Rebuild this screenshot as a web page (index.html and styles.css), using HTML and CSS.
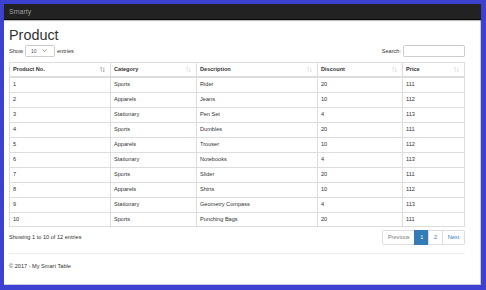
FILE: index.html
```
<!DOCTYPE html>
<html lang="en">
<head>
    <meta name="viewport" content="width=device-width, initial-scale=1.0">
    <title>Product - Smarty</title>
    <link rel="stylesheet" href="styles.css">
</head>
<body>
    <div class="frame">
        <nav class="navbar">
            <span class="brand">Smarty</span>
        </nav>

        <div class="container">
            <h1>Product</h1>

            <div class="controls">
                <label class="length">Show
                    <span class="select">10
                        <svg width="5" height="3" viewBox="0 0 5 3"><path d="M0.5 0.5 L2.5 2.5 L4.5 0.5" fill="none" stroke="#555" stroke-width="0.6"/></svg>
                    </span>
                    entries</label>
                <label class="filter">Search: <span class="search"></span></label>
            </div>

            <table class="grid">
                <colgroup>
                    <col style="width: 101px">
                    <col style="width: 86px">
                    <col style="width: 121px">
                    <col style="width: 85px">
                    <col style="width: 62px">
                </colgroup>
                <thead>
                    <tr>
                        <th><div class="th-in">Product No. <svg class="sort active" width="5" height="5" viewBox="0 0 5 5"><path d="M1.2 0.3 V4.7 M0.3 1.3 L1.2 0.3 L2.1 1.3 M3.8 0.3 V4.7 M2.9 3.7 L3.8 4.7 L4.7 3.7" fill="none" stroke="currentColor" stroke-width="0.5"/></svg></div></th>
                        <th><div class="th-in">Category <svg class="sort" width="5" height="5" viewBox="0 0 5 5"><path d="M1.2 0.3 V4.7 M0.3 1.3 L1.2 0.3 L2.1 1.3 M3.8 0.3 V4.7 M2.9 3.7 L3.8 4.7 L4.7 3.7" fill="none" stroke="currentColor" stroke-width="0.5"/></svg></div></th>
                        <th><div class="th-in">Description <svg class="sort" width="5" height="5" viewBox="0 0 5 5"><path d="M1.2 0.3 V4.7 M0.3 1.3 L1.2 0.3 L2.1 1.3 M3.8 0.3 V4.7 M2.9 3.7 L3.8 4.7 L4.7 3.7" fill="none" stroke="currentColor" stroke-width="0.5"/></svg></div></th>
                        <th><div class="th-in">Discount <svg class="sort" width="5" height="5" viewBox="0 0 5 5"><path d="M1.2 0.3 V4.7 M0.3 1.3 L1.2 0.3 L2.1 1.3 M3.8 0.3 V4.7 M2.9 3.7 L3.8 4.7 L4.7 3.7" fill="none" stroke="currentColor" stroke-width="0.5"/></svg></div></th>
                        <th><div class="th-in">Price <svg class="sort" width="5" height="5" viewBox="0 0 5 5"><path d="M1.2 0.3 V4.7 M0.3 1.3 L1.2 0.3 L2.1 1.3 M3.8 0.3 V4.7 M2.9 3.7 L3.8 4.7 L4.7 3.7" fill="none" stroke="currentColor" stroke-width="0.5"/></svg></div></th>
                    </tr>
                </thead>
                <tbody>
                    <tr><td>1</td><td>Sports</td><td>Rider</td><td>20</td><td>111</td></tr>
                    <tr><td>2</td><td>Apparels</td><td>Jeans</td><td>10</td><td>112</td></tr>
                    <tr><td>3</td><td>Stationary</td><td>Pen Set</td><td>4</td><td>113</td></tr>
                    <tr><td>4</td><td>Sports</td><td>Dumbles</td><td>20</td><td>111</td></tr>
                    <tr><td>5</td><td>Apparels</td><td>Trouser</td><td>10</td><td>112</td></tr>
                    <tr><td>6</td><td>Stationary</td><td>Notebooks</td><td>4</td><td>113</td></tr>
                    <tr><td>7</td><td>Sports</td><td>Slider</td><td>20</td><td>111</td></tr>
                    <tr><td>8</td><td>Apparels</td><td>Shirts</td><td>10</td><td>112</td></tr>
                    <tr><td>9</td><td>Stationary</td><td>Geometry Compass</td><td>4</td><td>113</td></tr>
                    <tr><td>10</td><td>Sports</td><td>Punching Bags</td><td>20</td><td>111</td></tr>
                </tbody>
            </table>

            <div class="table-foot">
                <div class="info">Showing 1 to 10 of 12 entries</div>
                <ul class="pagination">
                    <li class="disabled"><a>Previous</a></li>
                    <li class="active"><a>1</a></li>
                    <li><a>2</a></li>
                    <li><a>Next</a></li>
                </ul>
            </div>

            <hr>
            <footer>
                <p>&copy; 2017 - My Smart Table</p>
            </footer>
        </div>
    </div>
</body>
</html>
```

FILE: styles.css
```
* {
    margin: 0;
    padding: 0;
    box-sizing: border-box;
}
body {
    font-family: 'Liberation Sans', Arial, sans-serif;
    font-size: 5.6px;
    line-height: 8px;
    color: #333;
    background: #3d41cf;
}
.frame {
    margin: 4px 5px 5px 4px;
    height: 281px;
    background: #fff;
    border-right: 1px solid #c9c9e6;
    border-bottom: 1px solid #c9c9e6;
}
.navbar {
    height: 16px;
    background: #222;
    border-bottom: 1px solid #080808;
    box-shadow: 0 1px 1px rgba(0, 0, 0, 0.25);
    display: flex;
    align-items: center;
    padding-left: 5px;
    margin-right: -1px;
}
.brand {
    font-size: 7px;
    color: #9d9d9d;
}
.container {
    padding: 0 15px 0 5px;
}
h1 {
    font-size: 14.4px;
    font-weight: 500;
    line-height: 1.1;
    margin: 8px 0 1px;
}
.controls {
    display: flex;
    justify-content: space-between;
    align-items: center;
    height: 12px;
}
.length, .filter {
    display: flex;
    align-items: center;
}
.select {
    display: inline-flex;
    align-items: center;
    justify-content: space-between;
    width: 30px;
    height: 12px;
    margin: 0 2px;
    padding: 0 7px 0 5px;
    border: 1px solid #ccc;
    border-radius: 1.5px;
    color: #555;
    font-size: 5px;
}
.search {
    display: inline-block;
    width: 62px;
    height: 12px;
    margin-left: 2px;
    border: 1px solid #ccc;
    border-radius: 1.5px;
}
.grid {
    width: 100%;
    margin-top: 5px;
    border-collapse: collapse;
    table-layout: fixed;
    border: 1px solid #ddd;
}
.grid th, .grid td {
    border: 1px solid #ddd;
    padding: 3px;
    text-align: left;
    line-height: 7.9px;
}
.grid th {
    font-weight: bold;
    border-bottom: 2px solid #ddd;
    line-height: 7.5px;
}
.th-in {
    display: flex;
    justify-content: space-between;
    align-items: center;
    padding-right: 2px;
}
.sort {
    color: #ccc;
}
.sort.active {
    color: #777;
}
.table-foot {
    display: flex;
    justify-content: space-between;
    align-items: center;
    margin-top: 2.5px;
}
.pagination {
    display: flex;
    list-style: none;
}
.pagination a {
    display: block;
    padding: 2.5px 4.8px;
    line-height: 8px;
    color: #337ab7;
    border: 1px solid #ddd;
    margin-left: -1px;
    background: #fff;
}
.pagination li:first-child a {
    border-radius: 1.6px 0 0 1.6px;
}
.pagination li:last-child a {
    border-radius: 0 1.6px 1.6px 0;
}
.pagination .disabled a {
    color: #777;
}
.pagination .active a {
    background: #337ab7;
    border-color: #337ab7;
    color: #fff;
}
hr {
    border: 0;
    border-top: 1px solid #eee;
    margin: 8px 0 8px;
}
footer p {
    line-height: 8px;
}
```
